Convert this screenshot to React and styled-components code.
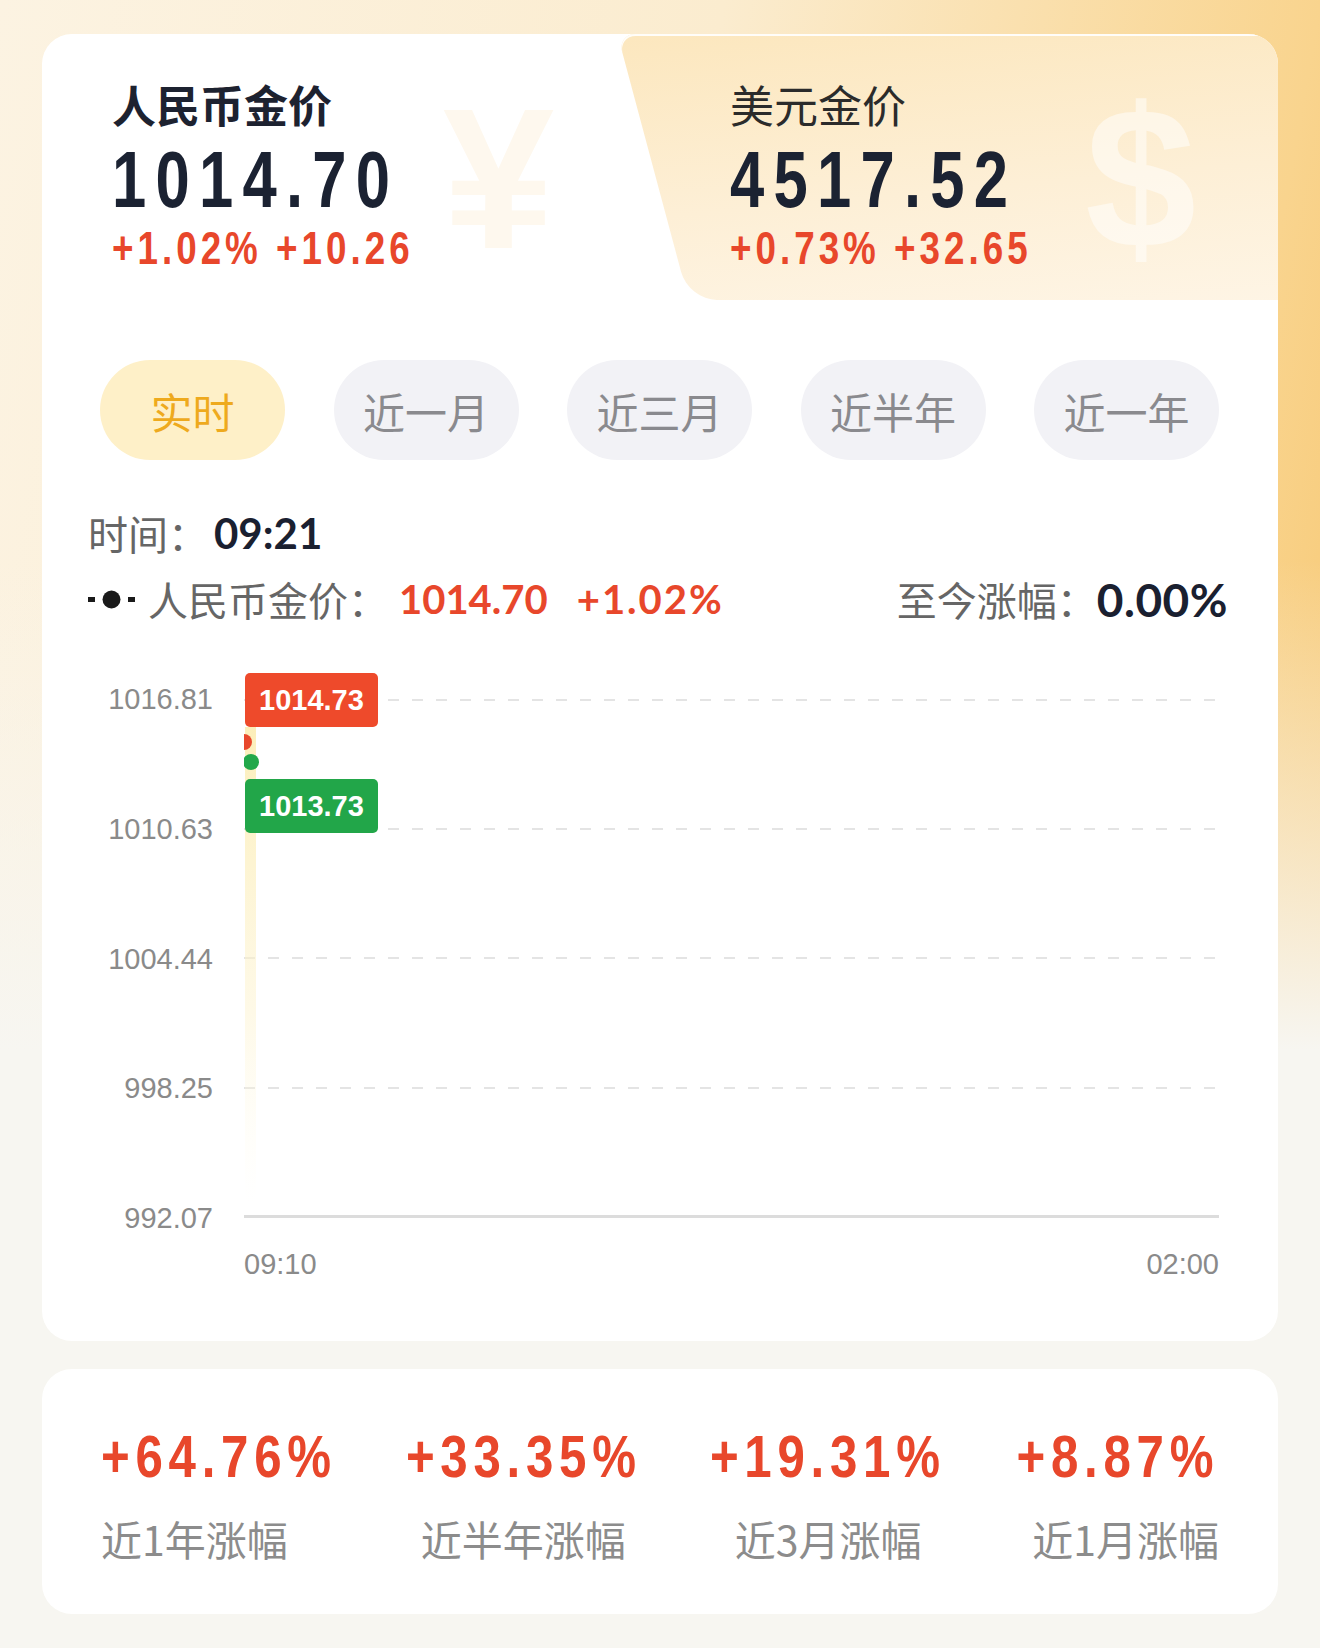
import React from 'react';
import styled, { createGlobalStyle } from 'styled-components';

const GlobalStyle = createGlobalStyle`
  html, body {
    margin: 0;
    padding: 0;
  }
  body {
    width: 1320px;
    min-height: 1648px;
    background:
      linear-gradient(180deg, rgba(247, 246, 241, 0) 0px, rgba(247, 246, 241, 0) 560px, #f7f6f1 1050px),
      linear-gradient(100deg, #fcf3e2 0%, #fbeccf 45%, #f9d48e 82%, #f6c266 100%);
    font-family: "Noto Sans CJK SC", "Noto Sans", sans-serif;
  }
`;

// no condensed face is installed, so the DIN-like digits are squeezed horizontally
const digitFont = `"Liberation Sans", Arial, sans-serif`;
const numFont = `Lato, "Liberation Sans", "Noto Sans CJK SC", sans-serif`;

const Page = styled.div`
  padding: 34px 42px 34px;
`;

const Card = styled.div`
  background: #fff;
  border-radius: 30px;
  overflow: hidden;
  padding-bottom: 60px;
`;

const Header = styled.div`
  display: grid;
  grid-template-columns: 1fr 1fr;
  height: 266px;
`;

const Tab = styled.div`
  position: relative;
  padding: 38px 0 0 70px;

  ${({ $active }) => !$active && `
    &::before {
      content: '';
      position: absolute;
      top: 0;
      bottom: 0;
      left: -7px;
      right: -120px;
      background: linear-gradient(175deg, #fce7be 0%, #fdefd6 55%, #fef5e6 100%);
      box-shadow: inset 0 2px 0 rgba(255, 255, 255, 0.9);
      transform: skewX(15deg);
      transform-origin: 0 50%;
      border-radius: 18px 0 0 28px;
    }
  `}
`;

const TabInner = styled.div`
  position: relative;
  z-index: 1;
`;

const Watermark = styled.span`
  position: absolute;
  top: ${({ $top }) => $top}px;
  left: ${({ $left }) => $left}px;
  font: bold 200px/1 "Liberation Sans", sans-serif;
  color: ${({ $color }) => $color};
  z-index: ${({ $z }) => $z || 0};
  pointer-events: none;
`;

const TabTitle = styled.div`
  font-size: 44px;
  line-height: 64px;
  font-weight: ${({ $active }) => ($active ? 700 : 400)};
  color: ${({ $active }) => ($active ? '#1d2230' : '#2b2b2b')};
`;

const Squeezed = styled.div`
  width: fit-content;
  font-family: ${digitFont};
  font-weight: 700;
  transform: scaleX(${({ $scale }) => $scale});
  transform-origin: ${({ $origin }) => $origin || 'left'} center;
  white-space: nowrap;
`;

const BigPrice = styled(Squeezed)`
  margin-top: -2px;
  font-size: 80px;
  line-height: 92px;
  letter-spacing: 12px;
  color: #1b2232;
`;

const Change = styled(Squeezed)`
  margin-top: -4px;
  font-size: 46px;
  line-height: 52px;
  letter-spacing: 5px;
  color: #e8472b;
`;

const Body = styled.div`
  padding: 0 50px 0 46px;
`;

const Pills = styled.div`
  display: flex;
  justify-content: space-between;
  margin: 60px 9px 0 12px;
`;

const Pill = styled.div`
  width: 185px;
  height: 100px;
  border-radius: 50px;
  display: flex;
  align-items: center;
  justify-content: center;
  font-size: 42px;
  background: ${({ $active }) => ($active ? '#fef0c8' : '#f2f2f6')};
  color: ${({ $active }) => ($active ? '#eeaa1e' : '#8a8a8e')};
`;

const InfoRow = styled.div`
  display: flex;
  align-items: center;
  justify-content: space-between;
  height: 48px;
  margin-top: ${({ $mt }) => $mt}px;
  font-size: 40px;
  color: #666;
`;

const Group = styled.div`
  display: flex;
  align-items: center;
`;

const Strong = styled.span`
  font-family: ${numFont};
  font-weight: 700;
  font-size: ${({ $size }) => $size}px;
  letter-spacing: ${({ $ls }) => $ls || 0}px;
  color: #1a2030;
  margin-left: ${({ $ml }) => $ml}px;
`;

const RedNum = styled.span`
  font-family: ${numFont};
  font-weight: 700;
  color: #e8472b;
  letter-spacing: ${({ $ls }) => $ls || 0}px;
  margin-left: ${({ $ml }) => $ml}px;
`;

const LegendIcon = styled.svg`
  width: 47px;
  height: 20px;
  margin-right: 13px;
`;

const Chart = styled.div`
  display: grid;
  grid-template-columns: 125px 1fr;
  column-gap: 31px;
  margin: 76px 9px 0 0;
`;

const YAxis = styled.div`
  height: 553px;
  margin: -17px 0 -17px;
  display: flex;
  flex-direction: column;
  justify-content: space-between;
  align-items: flex-end;
  font: 29px/34px "Liberation Sans", Arial, sans-serif;
  color: #8a8a8a;
`;

const Plot = styled.div`
  position: relative;
  height: 519px;

  svg {
    display: block;
    width: 100%;
    height: 100%;
  }
`;

const Tag = styled.div`
  position: absolute;
  left: 1px;
  top: ${({ $top }) => $top}px;
  height: 54px;
  padding: 0 14px;
  border-radius: 5px;
  background: ${({ $color }) => $color};
  color: #fff;
  font: bold 29px/54px "Liberation Sans", Arial, sans-serif;
`;

const XAxis = styled.div`
  grid-column: 2;
  display: flex;
  justify-content: space-between;
  margin-top: 29px;
  font: 29px/34px "Liberation Sans", Arial, sans-serif;
  color: #8a8a8a;
`;

const StatsCard = styled.div`
  margin-top: 28px;
  background: #fff;
  border-radius: 30px;
  padding: 58px 59px 52px;
  display: flex;
  justify-content: space-between;
`;

const Stat = styled.div`
  width: ${({ $width }) => $width}px;
  display: flex;
  flex-direction: column;
  align-items: ${({ $align }) => $align};
`;

const StatValue = styled(Squeezed)`
  font-size: 60px;
  line-height: 60px;
  letter-spacing: 7px;
  color: #e8472b;
`;

const StatLabel = styled.div`
  margin-top: 27px;
  font-size: 41px;
  line-height: 48px;
  white-space: nowrap;
  color: #8c8c8c;
`;

const yLabels = ['1016.81', '1010.63', '1004.44', '998.25', '992.07'];
const gridY = [1, 130, 259, 389];

const stats = [
  { value: '+64.76%', label: '近1年涨幅', align: 'flex-start', width: 233 },
  { value: '+33.35%', label: '近半年涨幅', align: 'center', width: 232 },
  { value: '+19.31%', label: '近3月涨幅', align: 'center', width: 231 },
  { value: '+8.87%', label: '近1月涨幅', align: 'flex-end', width: 202 },
];

const origins = { 'flex-start': 'left', center: 'center', 'flex-end': 'right' };

const ranges = ['实时', '近一月', '近三月', '近半年', '近一年'];

export default function App() {
  return (
    <Page>
      <GlobalStyle />
      <Card>
        <Header>
          <Tab $active>
            <Watermark $top={45} $left={401} $color="#fef8ee">¥</Watermark>
            <TabInner>
              <TabTitle $active>人民币金价</TabTitle>
              <BigPrice $scale={0.77}>1014.70</BigPrice>
              <Change $scale={0.8}>+1.02% +10.26</Change>
            </TabInner>
          </Tab>
          <Tab>
            <Watermark $top={44} $left={425} $z={1} $color="rgba(255,255,255,0.5)">$</Watermark>
            <TabInner>
              <TabTitle>美元金价</TabTitle>
              <BigPrice $scale={0.77}>4517.52</BigPrice>
              <Change $scale={0.8}>+0.73% +32.65</Change>
            </TabInner>
          </Tab>
        </Header>

        <Body>
          <Pills>
            {ranges.map((r, i) => (
              <Pill key={r} $active={i === 0}>{r}</Pill>
            ))}
          </Pills>

          <InfoRow $mt={49}>
            <Group>
              时间：<Strong $size={42} $ml={6}>09:21</Strong>
            </Group>
          </InfoRow>

          <InfoRow $mt={18}>
            <Group>
              <LegendIcon viewBox="0 0 47 20">
                <rect x="0" y="8" width="7" height="5" fill="#1a1a1a" />
                <circle cx="23.5" cy="10.5" r="9" fill="#1a1a1a" />
                <rect x="40" y="8" width="7" height="5" fill="#1a1a1a" />
              </LegendIcon>
              人民币金价：
              <RedNum $ml={11}>1014.70</RedNum>
              <RedNum $ml={29} $ls={2}>+1.02%</RedNum>
            </Group>
            <Group>
              至今涨幅：<Strong $size={46} $ml={0} $ls={0.5}>0.00%</Strong>
            </Group>
          </InfoRow>

          <Chart>
            <YAxis>
              {yLabels.map((l) => (
                <span key={l}>{l}</span>
              ))}
            </YAxis>
            <Plot>
              <svg viewBox="0 0 975 519" preserveAspectRatio="none">
                <defs>
                  <linearGradient id="fade" x1="0" y1="0" x2="0" y2="1">
                    <stop offset="0" stopColor="#fbeaa8" stopOpacity="0.8" />
                    <stop offset="0.6" stopColor="#fdf3cf" stopOpacity="0.5" />
                    <stop offset="1" stopColor="#fffbea" stopOpacity="0" />
                  </linearGradient>
                </defs>
                {gridY.map((y) => (
                  <line key={y} x1="0" x2="975" y1={y} y2={y} stroke="#e4e4e4" strokeWidth="2" strokeDasharray="11 13" />
                ))}
                <line x1="0" x2="975" y1="517.5" y2="517.5" stroke="#dcdcdc" strokeWidth="3" />
                <rect x="1" y="28" width="11" height="475" fill="url(#fade)" />
                <circle cx="0" cy="43" r="8" fill="#e8472b" />
                <circle cx="7" cy="63" r="8" fill="#22a84a" />
              </svg>
              <Tag $top={-26} $color="#ee4a2b">1014.73</Tag>
              <Tag $top={80} $color="#22a649">1013.73</Tag>
            </Plot>
            <XAxis>
              <span>09:10</span>
              <span>02:00</span>
            </XAxis>
          </Chart>
        </Body>
      </Card>

      <StatsCard>
        {stats.map((s) => (
          <Stat key={s.label} $align={s.align} $width={s.width}>
            <StatValue $scale={0.82} $origin={origins[s.align]}>{s.value}</StatValue>
            <StatLabel>{s.label}</StatLabel>
          </Stat>
        ))}
      </StatsCard>
    </Page>
  );
}
